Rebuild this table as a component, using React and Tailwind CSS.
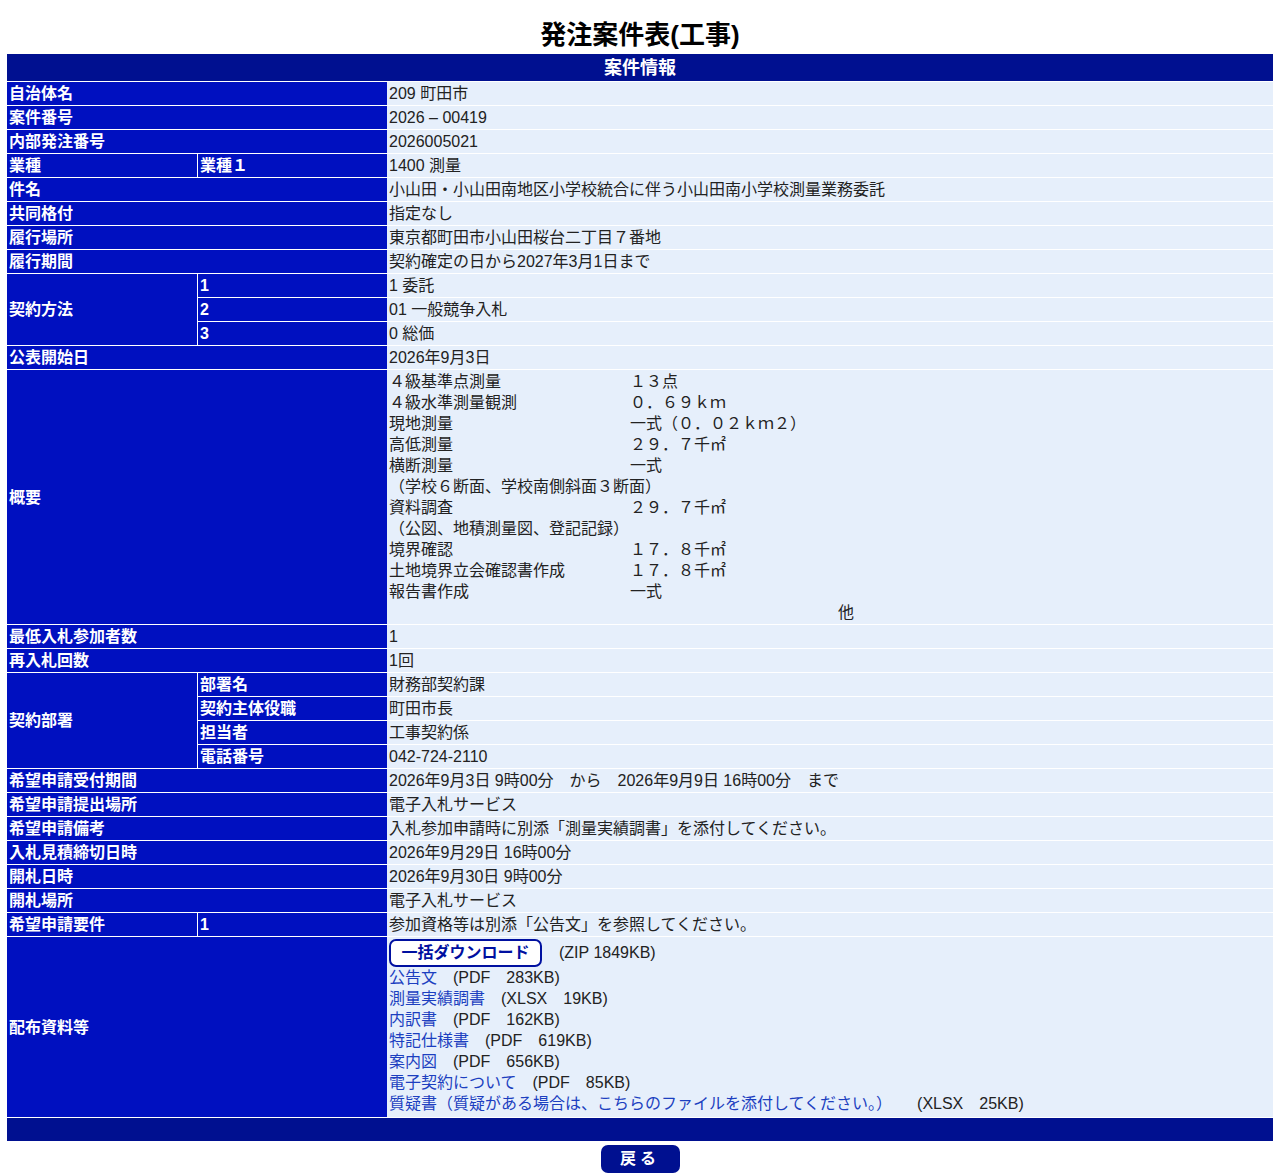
const label = 'bg-[#0010c0] text-white font-bold px-0.5 py-px leading-[21px] flex items-center';
const sub = 'bg-[#0010c0] text-white font-bold px-0.5 py-px leading-[21px] flex items-center border-l border-white';
const value = 'bg-[#e6effb] text-[#222] px-0.5 py-px leading-[21px]';

const Row = ({ name, children }) => (
  <>
    <div className={label + ' col-span-2'}>{name}</div>
    <div className={value}>{children}</div>
  </>
);

const summary = [
  ['４級基準点測量', '１３点'],
  ['４級水準測量観測', '０．６９ｋｍ'],
  ['現地測量', '一式（０．０２ｋｍ２）'],
  ['高低測量', '２９．７千㎡'],
  ['横断測量', '一式'],
  ['（学校６断面、学校南側斜面３断面）'],
  ['資料調査', '２９．７千㎡'],
  ['（公図、地積測量図、登記記録）'],
  ['境界確認', '１７．８千㎡'],
  ['土地境界立会確認書作成', '１７．８千㎡'],
  ['報告書作成', '一式'],
];

const files = [
  ['公告文', '(PDF\u3000283KB)'],
  ['測量実績調書', '(XLSX\u300019KB)'],
  ['内訳書', '(PDF\u3000162KB)'],
  ['特記仕様書', '(PDF\u3000619KB)'],
  ['案内図', '(PDF\u3000656KB)'],
  ['電子契約について', '(PDF\u300085KB)'],
  ['質疑書（質疑がある場合は、こちらのファイルを添付してください。）', '(XLSX\u300025KB)', 'pl-[17px]'],
];

export default function App() {
  return (
    <div className="min-h-[1176px] bg-white px-[7px] text-[16px] font-['Liberation_Sans','Noto_Sans_CJK_JP',sans-serif]">
      <h1 className="pt-[20px] pb-[4px] text-center text-[26px] leading-[30px] font-bold text-black">
        発注案件表(工事)
      </h1>

      <div className="grid grid-cols-[190px_190px_1fr] gap-y-px bg-white">
        <div className="col-span-3 h-[27px] bg-[#001090] pt-[2px] text-white font-bold text-[18px] leading-[25px] text-center">
          案件情報
        </div>

        <Row name="自治体名">209 町田市</Row>
        <Row name="案件番号">2026 – 00419</Row>
        <Row name="内部発注番号">2026005021</Row>

        <div className={label}>業種</div>
        <div className={sub}>業種１</div>
        <div className={value}>1400 測量</div>

        <Row name="件名">小山田・小山田南地区小学校統合に伴う小山田南小学校測量業務委託</Row>
        <Row name="共同格付">指定なし</Row>
        <Row name="履行場所">東京都町田市小山田桜台二丁目７番地</Row>
        <Row name="履行期間">契約確定の日から2027年3月1日まで</Row>

        <div className={label + ' row-span-3'}>契約方法</div>
        <div className={sub}>1</div>
        <div className={value}>1 委託</div>
        <div className={sub}>2</div>
        <div className={value}>01 一般競争入札</div>
        <div className={sub}>3</div>
        <div className={value}>0 総価</div>

        <Row name="公表開始日">2026年9月3日</Row>

        <div className={label + ' col-span-2'}>概要</div>
        <div className={value}>
          <div className="grid grid-cols-[241px_1fr]">
            {summary.map((s, i) =>
              s.length === 1 ? (
                <div key={i} className="col-span-2">{s[0]}</div>
              ) : (
                <div key={i} className="contents">
                  <div>{s[0]}</div>
                  <div>{s[1]}</div>
                </div>
              )
            )}
          </div>
          <div className="pl-[449px]">他</div>
        </div>

        <Row name="最低入札参加者数">1</Row>
        <Row name="再入札回数">1回</Row>

        <div className={label + ' row-span-4'}>契約部署</div>
        <div className={sub}>部署名</div>
        <div className={value}>財務部契約課</div>
        <div className={sub}>契約主体役職</div>
        <div className={value}>町田市長</div>
        <div className={sub}>担当者</div>
        <div className={value}>工事契約係</div>
        <div className={sub}>電話番号</div>
        <div className={value}>042-724-2110</div>

        <Row name="希望申請受付期間">2026年9月3日 9時00分　から　2026年9月9日 16時00分　まで</Row>
        <Row name="希望申請提出場所">電子入札サービス</Row>
        <Row name="希望申請備考">入札参加申請時に別添「測量実績調書」を添付してください。</Row>
        <Row name="入札見積締切日時">2026年9月29日 16時00分</Row>
        <Row name="開札日時">2026年9月30日 9時00分</Row>
        <Row name="開札場所">電子入札サービス</Row>

        <div className={label}>希望申請要件</div>
        <div className={sub}>1</div>
        <div className={value}>参加資格等は別添「公告文」を参照してください。</div>

        <div className={label + ' col-span-2'}>配布資料等</div>
        <div className={value + ' pb-[3px]'}>
          <div className="flex items-center gap-[17px] h-[29px]">
            <button className="h-[28px] w-[153px] rounded-[7px] border-2 border-[#0010a0] bg-white text-[#0010a0] font-bold leading-none">
              一括ダウンロード
            </button>
            <span>(ZIP 1849KB)</span>
          </div>
          {files.map(([name, meta, extra]) => (
            <div key={name}>
              <a href="#" className="text-[#1c3fc0]">{name}</a>
              <span className={extra}>{'\u3000' + meta}</span>
            </div>
          ))}
        </div>

        <div className="col-span-3 h-[23px] bg-[#001090]" />
      </div>

      <div className="flex justify-center pt-[4px]">
        <button className="h-[28px] w-[79px] rounded-[7px] bg-[#001090] text-white font-bold tracking-[4px] leading-none">
          戻る
        </button>
      </div>
    </div>
  );
}
